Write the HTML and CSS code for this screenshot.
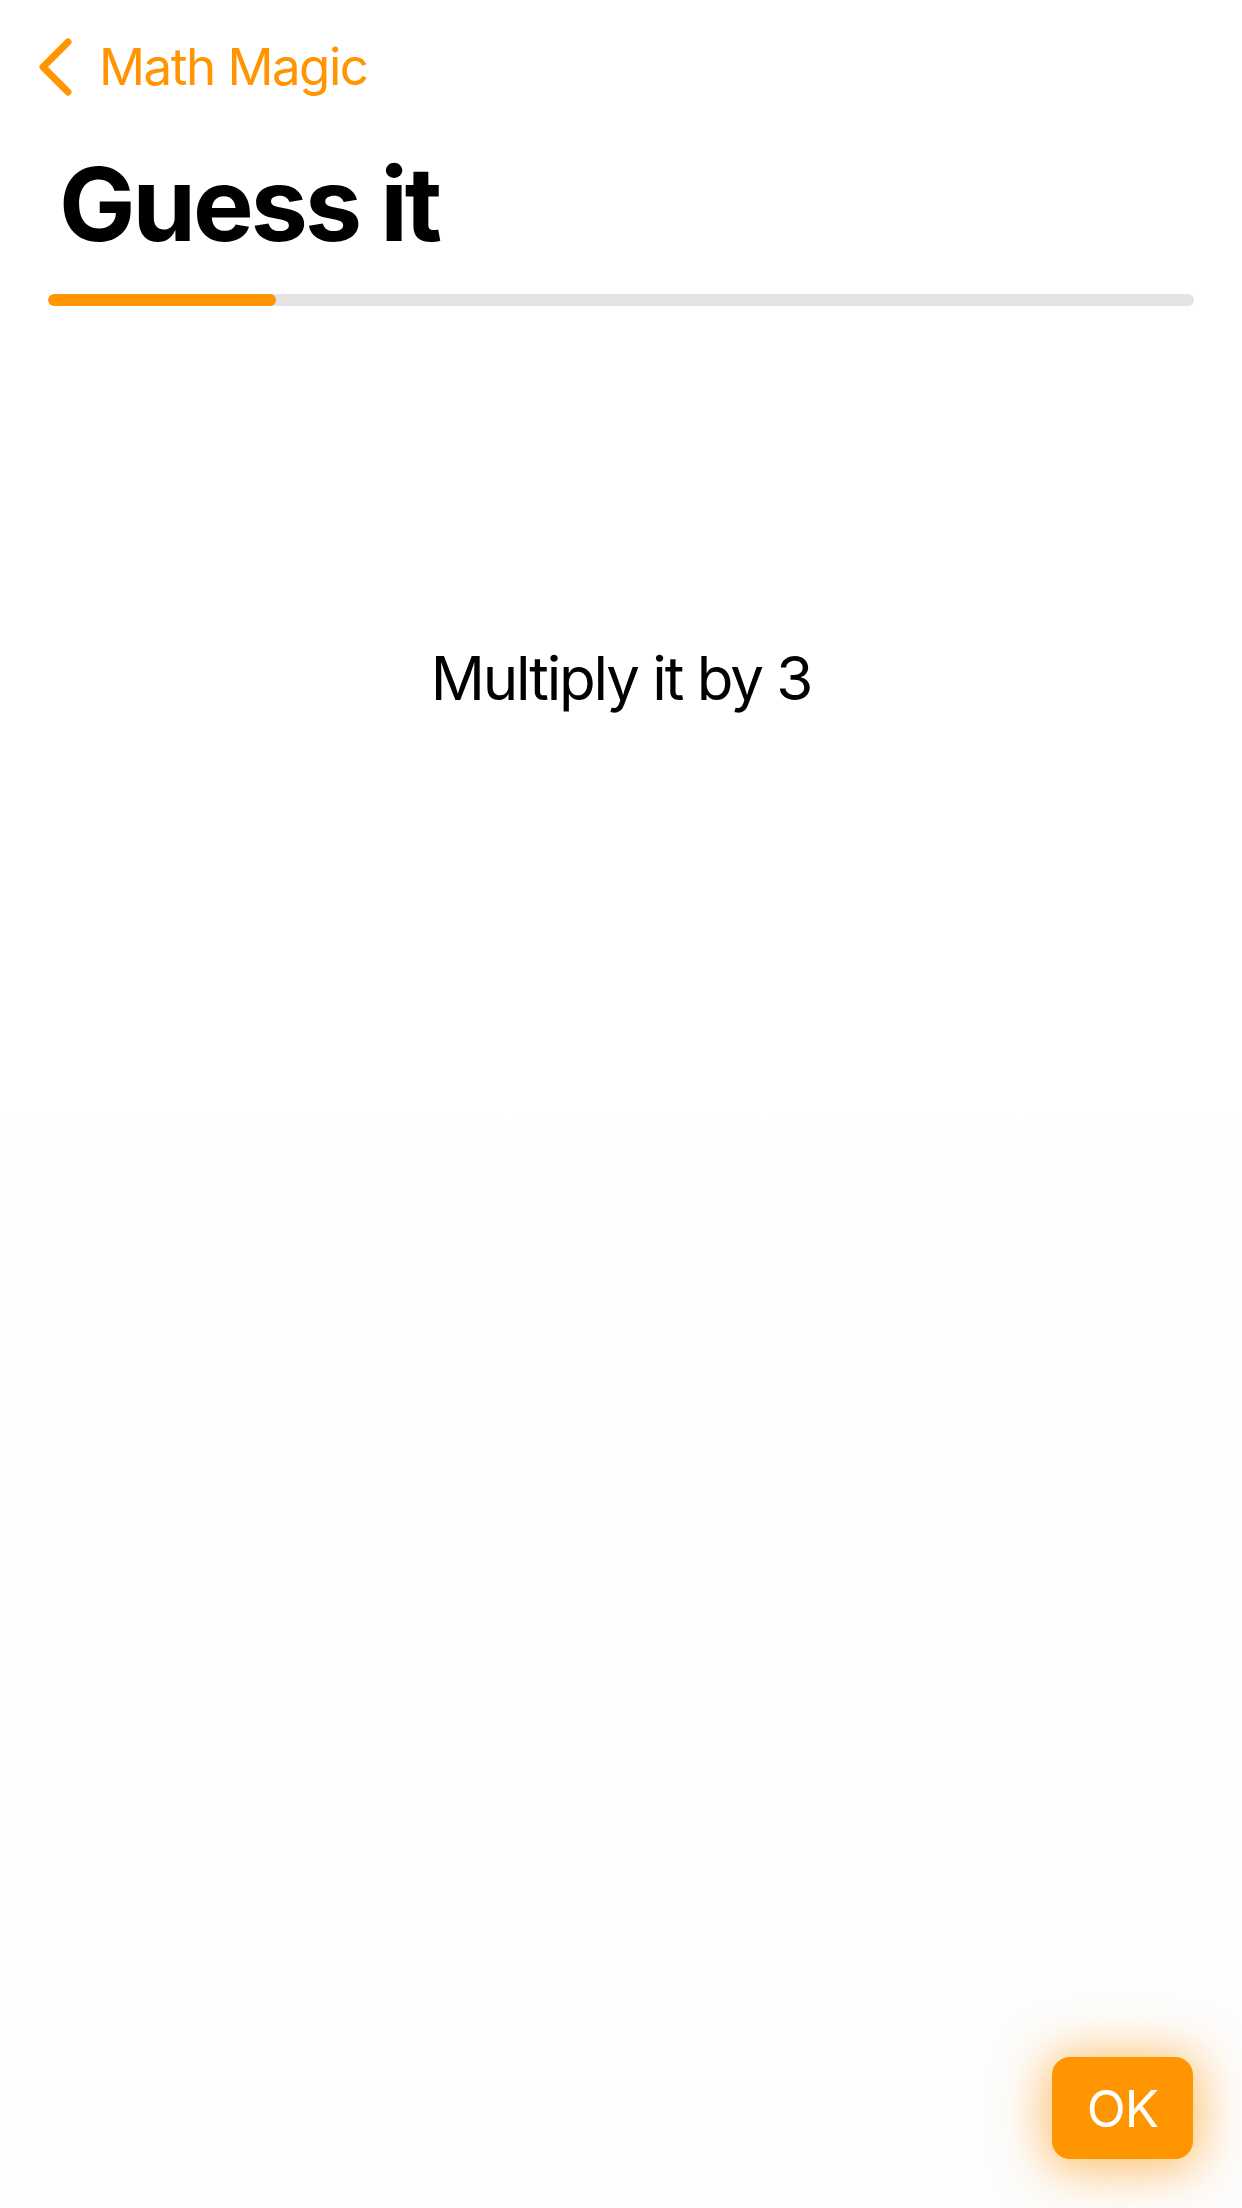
FILE: index.html
```html
<!DOCTYPE html>
<html lang="en">
<head>
<meta charset="utf-8">
<title>Guess it</title>
<link rel="stylesheet" href="styles.css">
</head>
<body>
<div class="screen">
  <header class="nav">
    <svg class="back-icon" viewBox="0 0 34 58" width="34" height="58" aria-hidden="true">
      <path d="M29 4 L4 29 L29 54" fill="none" stroke="#FF9500" stroke-width="7" stroke-linecap="round" stroke-linejoin="round"/>
    </svg>
    <span class="back-label">Math Magic</span>
  </header>
  <h1 class="title">Guess it</h1>
  <div class="progress"><div class="progress-fill" style="width: 19.9%"></div></div>
  <main class="content">
    <p class="prompt">Multiply it by 3</p>
  </main>
  <footer class="footer">
    <button class="ok-btn">OK</button>
  </footer>
</div>
</body>
</html>
```
FILE: styles.css
```css
html, body {
  margin: 0;
  padding: 0;
  background: #ffffff;
}
body {
  font-family: Inter, "Noto Sans", "Liberation Sans", sans-serif;
  color: #000;
}
.screen {
  width: 1242px;
  height: 2208px;
  display: flex;
  flex-direction: column;
  background: linear-gradient(to bottom, #ffffff 0%, #ffffff 50%, #fdfdfd 100%);
}
.nav {
  display: flex;
  align-items: center;
  margin-top: 36px;
  height: 61px;
  padding-left: 39px;
}
.back-icon {
  display: block;
  flex: none;
}
.back-label {
  margin-left: 26px;
  font-size: 51px;
  line-height: 61px;
  color: #FF9500;
  letter-spacing: -1.5px;
}
.title {
  margin: 46px 0 0 59px;
  font-size: 102px;
  line-height: 122px;
  font-weight: 700;
  letter-spacing: -3px;
}
.progress {
  margin: 29px 48px 0 48px;
  height: 12px;
  border-radius: 6px;
  background: #E3E3E5;
  overflow: hidden;
}
.progress-fill {
  height: 100%;
  border-radius: 6px;
  background: #FF9500;
}
.content {
  display: flex;
  justify-content: center;
}
.prompt {
  margin: 336px 0 0 0;
  font-size: 60px;
  line-height: 72px;
  text-align: center;
  letter-spacing: -2.2px;
}
.footer {
  margin-top: auto;
  display: flex;
  justify-content: flex-end;
  padding: 0 49px 49px 0;
}
.ok-btn {
  width: 141px;
  height: 102px;
  border: none;
  border-radius: 18px;
  background: #FF9500;
  color: #fff;
  font-family: Inter, "Noto Sans", "Liberation Sans", sans-serif;
  font-size: 51px;
  line-height: 1;
  letter-spacing: -1px;
  padding: 0;
  box-shadow: 0 4px 50px 6px rgba(255, 149, 0, 0.6);
}
```
